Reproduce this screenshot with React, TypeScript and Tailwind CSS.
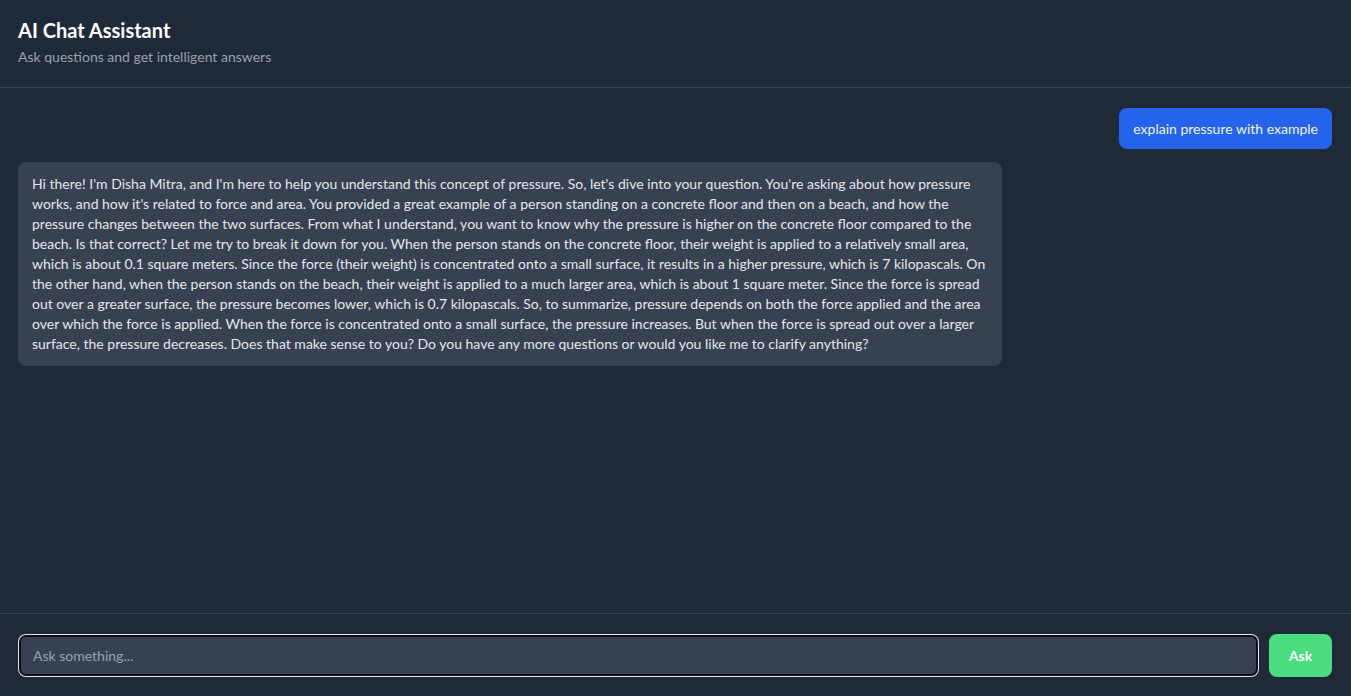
import { useState } from "react";

const REPLY_LINES = [
  "Hi there! I'm Disha Mitra, and I'm here to help you understand this concept of pressure. So, let's dive into your question. You're asking about how pressure",
  "works, and how it's related to force and area. You provided a great example of a person standing on a concrete floor and then on a beach, and how the",
  "pressure changes between the two surfaces. From what I understand, you want to know why the pressure is higher on the concrete floor compared to the",
  "beach. Is that correct? Let me try to break it down for you. When the person stands on the concrete floor, their weight is applied to a relatively small area,",
  "which is about 0.1 square meters. Since the force (their weight) is concentrated onto a small surface, it results in a higher pressure, which is 7 kilopascals. On",
  "the other hand, when the person stands on the beach, their weight is applied to a much larger area, which is about 1 square meter. Since the force is spread",
  "out over a greater surface, the pressure becomes lower, which is 0.7 kilopascals. So, to summarize, pressure depends on both the force applied and the area",
  "over which the force is applied. When the force is concentrated onto a small surface, the pressure increases. But when the force is spread out over a larger",
  "surface, the pressure decreases. Does that make sense to you? Do you have any more questions or would you like me to clarify anything?",
];

export default function App() {
  const [question, setQuestion] = useState("");

  return (
    <div className="h-screen flex flex-col bg-[#1f2937] text-gray-200" style={{ fontFamily: "Lato, 'Noto Sans', sans-serif" }}>
      {/* Header */}
      <div className="px-[18px] pt-4 pb-5 border-b border-[#374151]">
        <h1 className="text-xl font-bold text-white leading-7">AI Chat Assistant</h1>
        <p className="mt-[3px] text-sm text-gray-400">Ask questions and get intelligent answers</p>
      </div>

      {/* Messages */}
      <div className="flex-1 overflow-y-auto pl-[18px] pr-[19px] pt-5 flex flex-col gap-[13px]">
        <div className="flex justify-end">
          <div className="h-[41px] flex items-center px-3.5 rounded-lg bg-[#2563eb] text-sm text-blue-50">explain pressure with example</div>
        </div>
        <div className="flex justify-start">
          <div className="w-[984px] px-3.5 py-3 rounded-lg bg-[#374151] text-sm leading-5 text-gray-200">
            {REPLY_LINES.map((line, i) => (
              <span key={i}>
                {line}
                {i < REPLY_LINES.length - 1 && <br />}
              </span>
            ))}
          </div>
        </div>
      </div>

      {/* Input */}
      <div className="border-t border-[#374151] pl-[18px] pr-[19px] pt-5 pb-[19px] flex gap-2.5">
        <div className="flex-1 p-px rounded-lg bg-[#dbe6f7]">
          <input
            value={question}
            onChange={e => setQuestion(e.target.value)}
            placeholder="Ask something..."
            className="w-full h-[41px] px-3 rounded-[7px] border-2 border-[#101010] bg-[#374151] text-sm text-white placeholder:text-gray-400 outline-none"
          />
        </div>
        <button className="h-[43px] w-[63px] rounded-lg bg-[#4ade80] text-sm font-bold text-white">Ask</button>
      </div>
    </div>
  );
}
